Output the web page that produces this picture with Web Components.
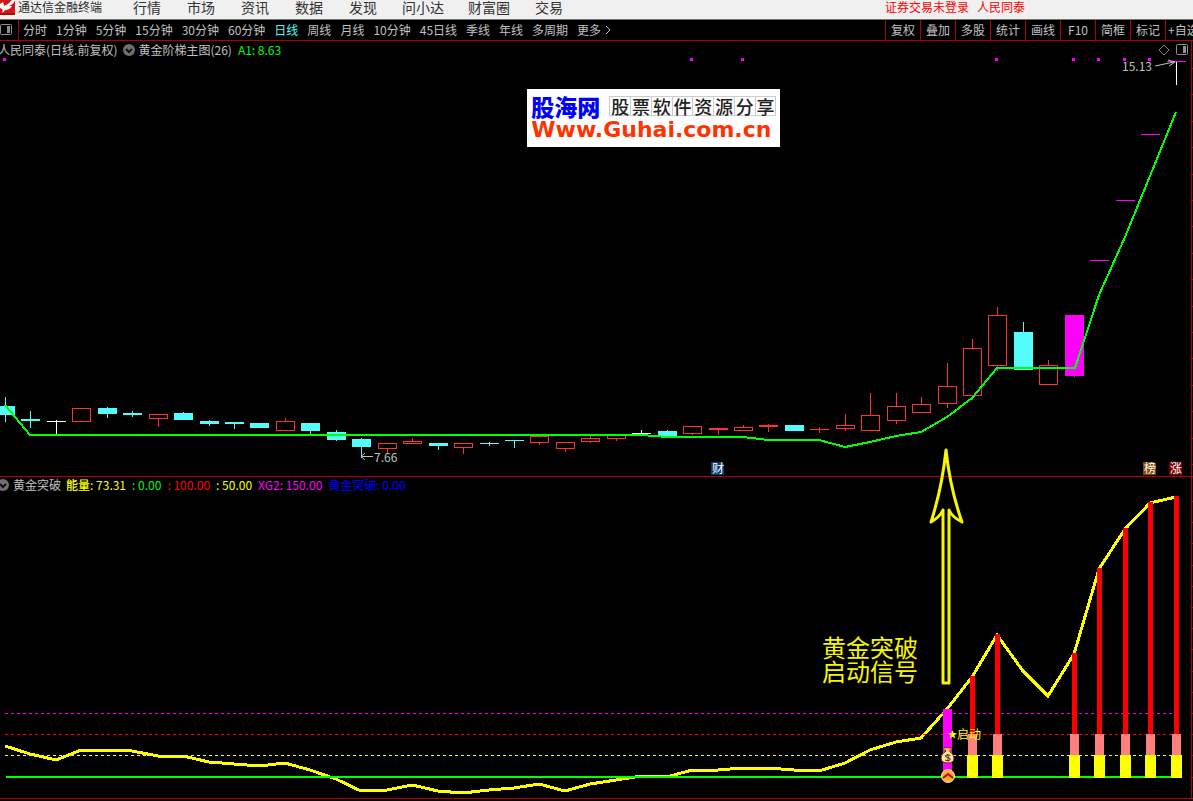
<!DOCTYPE html>
<html lang="zh-CN">
<head>
<meta charset="UTF-8">
<title>通达信金融终端</title>
<style>
  html, body {
    margin: 0;
    background: #000;
  }
  body {
    font: 12px/16px "Noto Sans CJK SC", sans-serif;
    color: #c0c0c0;
  }
</style>
</head>
<body>
<trade-terminal></trade-terminal>

<script>
// 公用按钮样式
const BUTTON_CSS = `
  button {
    margin: 0;
    padding: 0;
    border: 0;
    background: none;
    color: inherit;
    font: inherit;
    white-space: nowrap;
    cursor: pointer;
  }
`;

// 第 i 根K线的中心横坐标
const STEP = 25.448;
const px = i => Math.floor(5.5 + i * STEP);

// 顶部菜单栏
class TitleBar extends HTMLElement {
  constructor() {
    super();
    this.attachShadow({ mode: 'open' });
    const menus = ['行情', '市场', '资讯', '数据', '发现', '问小达', '财富圈', '交易'];
    this.shadowRoot.innerHTML = `
      <style>
        ${BUTTON_CSS}
        :host {
          display: flex;
          align-items: flex-start;
          height: 19px;
          background: #f0f0f0;
          border-bottom: 1px solid #6e7670;
          color: #2b2b2b;
          line-height: 14px;
        }
        svg { flex: none; width: 15px; height: 15px; }
        .name { width: 102px; padding-left: 3px; white-space: nowrap; }
        nav { display: flex; flex: 1; font-size: 14px; color: #333; }
        nav button { padding: 0 13px; }
        nav button.long { padding: 0 12px; }
        .login { display: flex; gap: 8px; padding-right: 168px; color: #f00; }
      </style>
      <svg viewBox="0 0 15 15" aria-hidden="true">
        <rect width="15" height="15" fill="#d41616"/>
        <path d="M0 13h15v2H0z" fill="#a80c0c"/>
        <path d="M0 4 L3 2 Q4 4 4 6 Q9 4 12 0 L15 0 Q14 4 9 6 L12 6 Q10 10 5 10 Q4 12 2 13 Q4 9 0 8Z" fill="#fff"/>
      </svg>
      <span class="name">通达信金融终端</span>
      <nav>${menus.map(m => `<button class="${m.length > 2 ? 'long' : ''}">${m}</button>`).join('')}</nav>
      <div class="login"><button>证券交易未登录</button><button>人民同泰</button></div>
    `;
  }
}
customElements.define('title-bar', TitleBar);

// 周期工具栏
class PeriodBar extends HTMLElement {
  constructor() {
    super();
    this.attachShadow({ mode: 'open' });
    const periods = ['分时', '1分钟', '5分钟', '15分钟', '30分钟', '60分钟', '日线', '周线', '月线',
      '10分钟', '45日线', '季线', '年线', '多周期'];
    const tools = ['复权', '叠加', '多股', '统计', '画线', 'F10', '简框', '标记', '+自选'];
    this.shadowRoot.innerHTML = `
      <style>
        ${BUTTON_CSS}
        :host {
          display: flex;
          height: 20px;
          overflow: hidden;
          border-bottom: 1px solid #b00000;
          line-height: 20px;
        }
        .toggle { display: flex; align-items: center; width: 19px; border-right: 1px solid #b00000; }
        .periods { display: flex; flex: 1; gap: 9px; padding-left: 4px; }
        .periods .on { color: #54fcfc; }
        .more { display: flex; align-items: center; gap: 4px; }
        .tools { display: flex; flex: none; }
        .tools button { box-sizing: border-box; width: 35px; border-left: 1px solid #b00000; }
        .tools button:last-child { width: 28px; padding-left: 2px; overflow: hidden; text-align: left; }
      </style>
      <button class="toggle" aria-label="侧栏">
        <svg width="12" height="12" viewBox="0 0 12 12" fill="none" stroke="#909090">
          <rect x="0.5" y="0.5" width="11" height="10" rx="1"/>
          <rect x="7" y="2" width="3" height="7" fill="#909090" stroke="none"/>
        </svg>
      </button>
      <div class="periods">
        ${periods.map(p => `<button class="${p === '日线' ? 'on' : ''}">${p}</button>`).join('')}
        <button class="more">更多<svg width="7" height="10" viewBox="0 0 7 10" fill="none" stroke="#c0c0c0"><path d="M1 1 L5 5 L1 9"/></svg></button>
      </div>
      <div class="tools">${tools.map(t => `<button>${t}</button>`).join('')}</div>
    `;
  }
}
customElements.define('period-bar', PeriodBar);

// 圆形下拉箭头
class DropIcon extends HTMLElement {
  constructor() {
    super();
    this.attachShadow({ mode: 'open' });
    this.shadowRoot.innerHTML = `
      <style>
        ${BUTTON_CSS}
        :host { display: block; flex: none; width: 12px; height: 12px; }
        button, svg { display: block; }
      </style>
      <button aria-label="指标菜单">
        <svg width="12" height="12" viewBox="0 0 12 12">
          <circle cx="6" cy="6" r="6" fill="#707070"/>
          <path d="M3 5 L6 8 L9 5" fill="none" stroke="#101010" stroke-width="2"/>
        </svg>
      </button>
    `;
  }
}
customElements.define('drop-icon', DropIcon);

// 图表面板: 标题行 + 画布
class ChartPanel extends HTMLElement {
  constructor() {
    super();
    this.attachShadow({ mode: 'open' });
    this.shadowRoot.innerHTML = `
      <style>
        :host {
          display: block;
          position: relative;
          border-bottom: 1px solid #b00000;
        }
        header {
          display: flex;
          align-items: center;
          height: var(--head, 18px);
          line-height: 16px;
          white-space: nowrap;
          box-sizing: border-box;
          padding-right: 5px;
        }
      </style>
      <header><slot name="head"></slot></header>
      <slot></slot>
    `;
  }
}
customElements.define('chart-panel', ChartPanel);

// 右侧坐标轴
function axis(top, bottom, first, gap) {
  let s = `<rect x="1191" y="${top}" width="1" height="${bottom - top}"/>`;
  for (let y = first; y < bottom; y += gap) {
    s += `<rect x="1192" y="${Math.round(y)}" width="1" height="1"/>`;
  }
  return `<g fill="#b00000">${s}</g>`;
}

const CHART_CSS = `
  :host { display: block; }
  svg { display: block; width: 100%; height: auto; overflow: visible; font-family: inherit; }
  .crisp { shape-rendering: crispEdges; }
`;

// 主图K线
class CandleChart extends HTMLElement {
  constructor() {
    super();
    this.attachShadow({ mode: 'open' });

    // [颜色, 最高, 实体上, 实体下, 最低]  c青 r红 w白 m紫
    const data = [
      ['c', 397, 406, 415, 422], ['c', 411, 419, 421, 428], ['w', 420, 421, 422, 434],
      ['r', 408, 408, 422, 422], ['c', 407, 408, 414, 418], ['c', 411, 413, 415, 417],
      ['r', 414, 414, 419, 427], ['c', 412, 413, 420, 420], ['c', 420, 421, 424, 426],
      ['c', 422, 422, 424, 429], ['c', 423, 423, 428, 428], ['r', 418, 421, 431, 431],
      ['c', 423, 423, 431, 434], ['c', 430, 432, 440, 441], ['c', 438, 439, 447, 458],
      ['r', 443, 443, 449, 453], ['r', 438, 441, 444, 444], ['c', 443, 443, 446, 450],
      ['r', 443, 443, 448, 454], ['c', 442, 443, 444, 446], ['c', 440, 440, 441, 448],
      ['r', 436, 436, 443, 445], ['r', 442, 442, 449, 452], ['r', 436, 438, 442, 443],
      ['r', 435, 435, 439, 441], ['w', 430, 433, 434, 434], ['c', 430, 431, 436, 436],
      ['r', 426, 426, 434, 435], ['r', 428, 428, 430, 435], ['r', 425, 427, 431, 431],
      ['r', 424, 425, 427, 432], ['c', 425, 425, 431, 431], ['r', 427, 429, 430, 433],
      ['r', 414, 425, 429, 431], ['r', 393, 415, 431, 431], ['r', 393, 406, 421, 424],
      ['r', 397, 404, 413, 413], ['r', 363, 386, 404, 408], ['r', 339, 348, 396, 400],
      ['r', 307, 315, 366, 371], ['c', 322, 332, 370, 370], ['r', 360, 365, 385, 385],
      ['m', 315, 315, 376, 377], ['m', 260, 260, 261, 261], ['m', 200, 200, 201, 201],
      ['m', 134, 134, 135, 135]
    ];
    const colors = { c: '#54fcfc', r: '#ff3232', w: '#fff', m: '#f0f' };

    const candles = data.map(([k, hi, top, bot, lo], i) => {
      const x = px(i);
      const c = colors[k];
      const h = bot - top;
      let s = '';
      if (top > hi) s += `<rect x="${x}" y="${hi}" width="1" height="${top - hi}" fill="${c}"/>`;
      if (lo > bot) s += `<rect x="${x}" y="${bot}" width="1" height="${lo - bot}" fill="${c}"/>`;
      if (k === 'r' && h > 2) {
        s += `<rect x="${x - 8.5}" y="${top + 0.5}" width="18" height="${h - 1}" fill="none" stroke="${c}"/>`;
      } else {
        s += `<rect x="${x - 9}" y="${top}" width="19" height="${h}" fill="${c}"/>`;
      }
      return s;
    }).join('');

    const dots = [3, 690, 741, 995, 1072, 1097, 1123, 1148]
      .map(x => `<rect x="${x}" y="58" width="3" height="3"/>`).join('');

    const badges = [['财', 711, '#0a3c70'], ['榜', 1143, '#8a4600'], ['涨', 1169, '#800000']]
      .map(([t, x, c]) => `
        <path d="M${x} 462h11l2 2v11h-13z" fill="${c}"/>
        <text x="${x + 1}" y="473" fill="#fff">${t}</text>`).join('');

    this.shadowRoot.innerHTML = `
      <style>${CHART_CSS}</style>
      <svg viewBox="0 59 1193 417" font-size="12">
        <g class="crisp">
          ${axis(41, 476, 68, 26.4)}
          ${candles}
          <rect x="1167" y="61" width="19" height="1" fill="#f0f"/>
          <rect x="1176" y="62" width="1" height="23" fill="#fff"/>
          <g fill="#f0f">${dots}</g>
          <polyline fill="none" stroke="#0f0" stroke-width="2" points="5,405 30,435 641,435 654,436 667,437
            743,437 768,440 819,440 845,447 870,442 896,436 921,432 947,417 972,398 997,368 1075,368
            1099,295 1125,237 1150,176 1176,112"/>
        </g>
        <g fill="none" stroke="#c0c0c0">
          <path d="M1155 66 L1174 62 M1168 60 L1175 62 L1169 66"/>
          <path d="M361 456.5 H373 M365 453 L361 456.5 L365 460"/>
        </g>
        <text x="1122" y="71" fill="#c0c0c0">15.13</text>
        <text x="374" y="462" fill="#c0c0c0">7.66</text>
        ${badges}
      </svg>
    `;
  }
}
customElements.define('candle-chart', CandleChart);

// 副图: 黄金突破
class EnergyChart extends HTMLElement {
  constructor() {
    super();
    this.attachShadow({ mode: 'open' });

    const energy = [746, 754, 760, 750, 750, 751, 756, 756, 762, 764, 766, 763, 770, 779, 791, 790,
      785, 791, 793, 790, 788, 784, 791, 784, 780, 776, 777, 770, 770, 768, 768, 770, 771, 763, 750,
      742, 738, 709, 677, 635, 671, 696, 654, 569, 529, 503, 497];
    const line = energy.map((y, i) => `${px(i)},${y}`).join(' ');

    // 启动后的柱子 [序号, 顶部]
    const bars = [[38, 676], [39, 634], [42, 653], [43, 568], [44, 528], [45, 502], [46, 496]]
      .map(([i, top]) => {
        const x = px(i);
        return `
          <rect x="${x - 2}" y="${top}" width="5" height="${734 - top}" fill="#f00"/>
          <rect x="${x - 4}" y="734" width="9" height="21" fill="#ff8080"/>
          <rect x="${x - 5}" y="755" width="11" height="23" fill="#ff0"/>`;
      }).join('');

    const dashes = [[713, '#f0f'], [734, '#f00'], [755, '#ff0']]
      .map(([y, c]) => `<path d="M5 ${y + 0.5}H1176" stroke="${c}" stroke-dasharray="3 3"/>`).join('');

    this.shadowRoot.innerHTML = `
      <style>${CHART_CSS}</style>
      <svg viewBox="0 493 1193 305">
        <g class="crisp">
          ${axis(477, 798, 501, 21.2)}
          <polyline points="${line}" fill="none" stroke="#ff0" stroke-width="3"/>
          ${dashes}
          <rect x="6" y="776" width="1170" height="2" fill="#0f0"/>
          ${bars}
          <rect x="943" y="709" width="9" height="67" fill="#f0f"/>
        </g>
        <path d="M952.5 730l1.2 3 3.3.2-2.6 2 .9 3.3-2.8-1.8-2.8 1.8.9-3.3-2.6-2 3.3-.2z" fill="#ff0"/>
        <text x="957" y="739" font-size="12" fill="#ff0">启动</text>

        <!-- 钱袋 -->
        <g stroke="#5a3200">
          <path d="M944 748h7l-2 3q5 3 5 7q0 5-6 5q-7 0-7-5q0-4 5-7z" fill="#ffeaa0"/>
          <path d="M944 749h7M946 751h4" stroke="#ffe000"/>
          <path d="M950.500 755.500q-3-1.500-5 0q-1 1.500 2.500 2q3 .5 2 2.500q-2 1.500-5 0M948 754v7.500" fill="none" stroke="#5a2020"/>
        </g>
        <!-- 上涨标志 -->
        <circle cx="948" cy="776" r="6.500" fill="#ffb02c" stroke="#ffe0a0"/>
        <path d="M943 778l5-4 5 4" fill="none" stroke="#c80000" stroke-width="2"/>

        <!-- 指向突破K线的箭头 -->
        <path d="M946 450Q942 488 931 522Q940 517 943 510V683H949V510Q952 517 962 522Q950 488 946 450Z"
          fill="none" stroke="#f6f600" stroke-width="3" stroke-linejoin="round"/>
        <g font-size="24" fill="#f6f600">
          <text x="822" y="657">黄金突破</text>
          <text x="822" y="681">启动信号</text>
        </g>
      </svg>
    `;
  }
}
customElements.define('energy-chart', EnergyChart);

// 股海网标识
class SiteMark extends HTMLElement {
  constructor() {
    super();
    this.attachShadow({ mode: 'open' });
    this.shadowRoot.innerHTML = `
      <style>
        :host {
          display: block;
          box-sizing: border-box;
          width: 253px;
          height: 58px;
          padding: 7px 4px;
          background: #fff;
          white-space: nowrap;
        }
        .row { display: flex; align-items: center; gap: 9px; height: 20px; }
        b { color: #00f; font-size: 23px; line-height: 20px; font-weight: 900; }
        .cells { display: flex; flex: 1; border-left: 1px solid #ccc; }
        .cells span {
          flex: 1;
          border: solid #ccc;
          border-width: 1px 1px 1px 0;
          color: #222;
          font-size: 18px;
          line-height: 18px;
          font-weight: 500;
          text-align: center;
        }
        a {
          display: block;
          margin-top: 3px;
          color: #ff3300;
          font: bold 22px/22px "DejaVu Sans", sans-serif;
          text-decoration: none;
        }
      </style>
      <div class="row">
        <b>股海网</b>
        <div class="cells">${[...'股票软件资源分享'].map(c => `<span>${c}</span>`).join('')}</div>
      </div>
      <a href="#">Www.Guhai.com.cn</a>
    `;
  }
}
customElements.define('site-mark', SiteMark);

// 整个页面
class TradeTerminal extends HTMLElement {
  constructor() {
    super();
    this.attachShadow({ mode: 'open' });
    this.shadowRoot.innerHTML = `
      <style>
        ${BUTTON_CSS}
        :host { display: block; overflow: hidden; }
        chart-panel.sub { --head: 16px; }
        .stock { margin-left: -2px; }
        .main drop-icon { margin: 0 3px 0 6px; }
        .sub drop-icon { margin: 0 4px 0 -3px; }
        .a1 { flex: 1; margin-left: 6px; color: #0f0; }
        .corner { display: flex; gap: 6px; }
        .corner svg { display: block; }
        .values { display: flex; gap: 6px; margin-left: 5px; }
        .values b { font-weight: 500; }
        /* 浮在K线图上方 */
        site-mark { position: absolute; left: 44.2%; top: 48px; }
      </style>
      <title-bar></title-bar>
      <period-bar></period-bar>
      <chart-panel class="main">
        <span slot="head" class="stock">人民同泰(日线.前复权)</span>
        <drop-icon slot="head"></drop-icon>
        <span slot="head">黄金阶梯主图(26)</span>
        <span slot="head" class="a1">A1: 8.63</span>
        <span slot="head" class="corner">
          <button aria-label="标记"><svg width="12" height="12" viewBox="0 0 12 12" fill="none" stroke="#808080"><path d="M6 1 L11 6 L6 11 L1 6Z"/></svg></button>
          <button aria-label="侧栏"><svg width="12" height="12" viewBox="0 0 12 12" fill="none" stroke="#909090"><rect x="0.5" y="0.5" width="11" height="10" rx="1"/><rect x="7" y="2" width="3" height="7" fill="#909090" stroke="none"/></svg></button>
        </span>
        <candle-chart></candle-chart>
        <site-mark></site-mark>
      </chart-panel>
      <chart-panel class="sub">
        <drop-icon slot="head"></drop-icon>
        <span slot="head">黄金突破</span>
        <span slot="head" class="values">
          <span style="color:#ff0"><b>能量</b>: 73.31</span>
          <span style="color:#0f0">: 0.00</span>
          <span style="color:#f00">: 100.00</span>
          <span style="color:#ff0">: 50.00</span>
          <span style="color:#f0f">XG2: 150.00</span>
          <span style="color:#00f">黄金突破: 0.00</span>
        </span>
        <energy-chart></energy-chart>
      </chart-panel>
    `;
  }
}
customElements.define('trade-terminal', TradeTerminal);
</script>
</body>
</html>
